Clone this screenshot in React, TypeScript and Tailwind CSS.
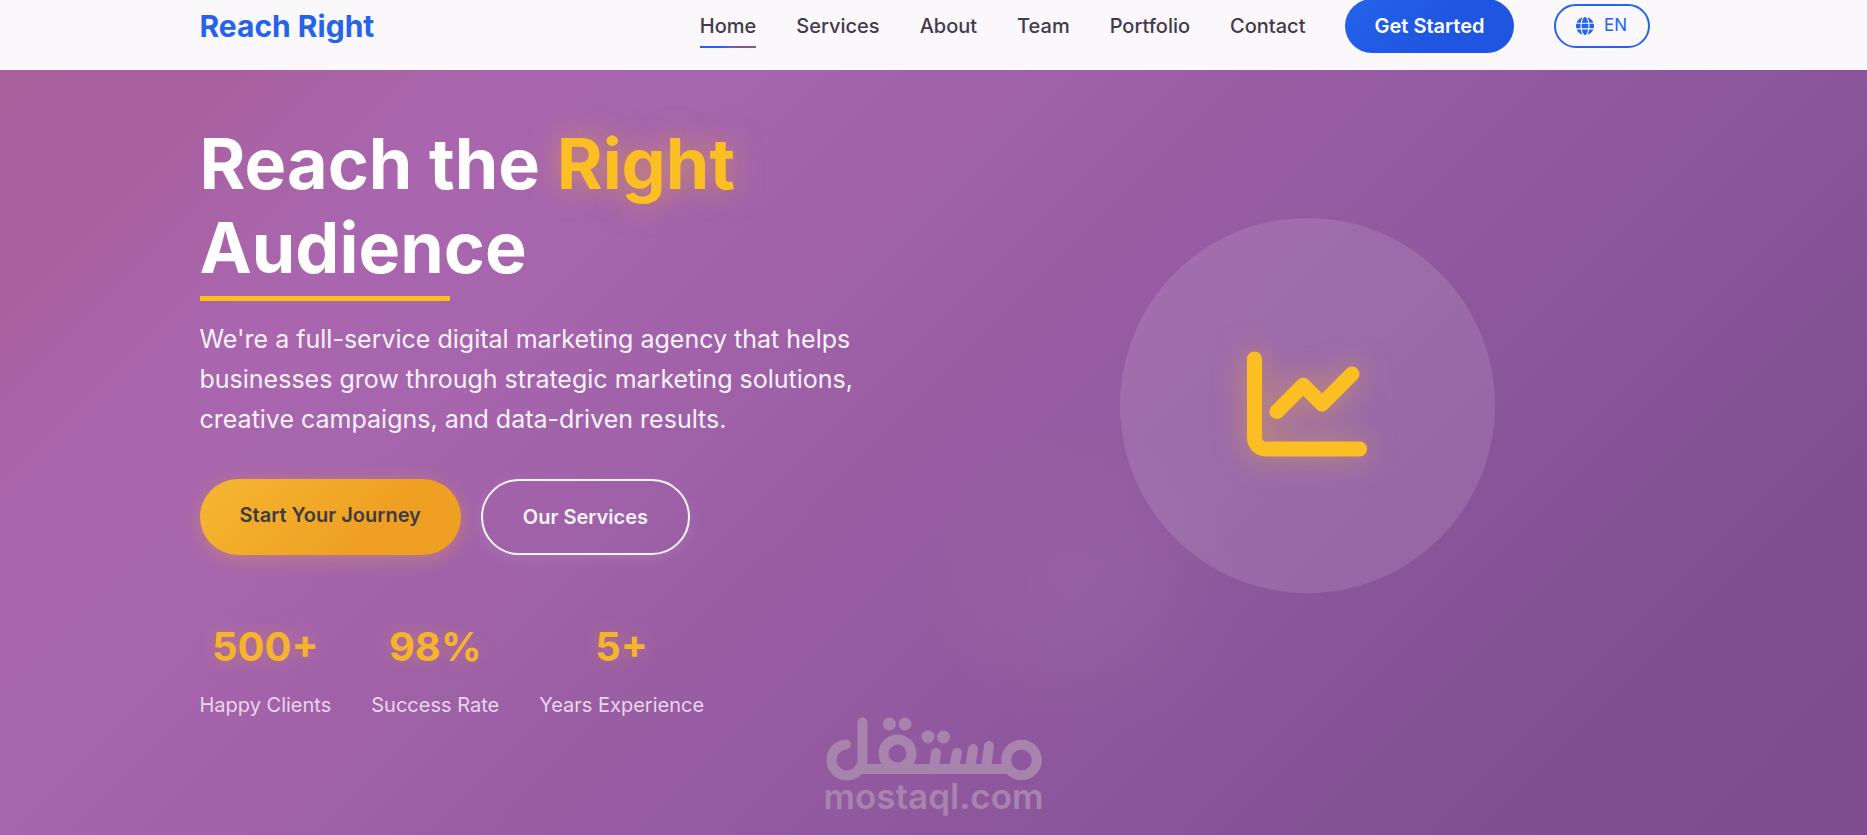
import { FaChartLine, FaGlobe } from "react-icons/fa6";

const navLinks = ["Home", "Services", "About", "Team", "Portfolio", "Contact"];

const stats = [
  { value: "500+", label: "Happy Clients" },
  { value: "98%", label: "Success Rate" },
  { value: "5+", label: "Years Experience" },
];

function Header() {
  return (
    <header className="overflow-hidden bg-[#faf8fb] pr-[18px]">
      <div className="mx-auto flex h-[70px] max-w-[1450px] items-center justify-between pb-[18px]">
        <a href="#home" className="text-[30px] leading-[48px] font-bold text-[#2563eb]">
          Reach Right
        </a>
        <div className="flex items-center gap-10">
          <nav className="flex items-center gap-10">
            {navLinks.map((label) => (
              <a
                key={label}
                href={`#${label.toLowerCase()}`}
                className="relative text-xl leading-8 font-medium text-[#443a4c]"
              >
                {label}
                {label === "Home" && (
                  <span className="absolute inset-x-0 top-9 h-0.5 bg-linear-to-r from-[#2563eb] from-40% to-[#8f4f96] to-75%" />
                )}
              </a>
            ))}
          </nav>
          <a
            href="#contact"
            className="flex h-[54px] items-center rounded-full bg-linear-135 from-[#2563eb] to-[#1f55e0] to-60% px-[29px] text-xl font-semibold text-white"
          >
            Get Started
          </a>
          <button
            type="button"
            className="flex h-11 w-24 items-center justify-center gap-2.5 rounded-full border-2 border-[#2563eb] text-[17px] text-[#2563eb]"
          >
            <FaGlobe className="size-[18px]" aria-hidden="true" />
            EN
          </button>
        </div>
      </div>
    </header>
  );
}

function Watermark() {
  return (
    <div className="pointer-events-none absolute bottom-0 left-1/2 flex w-[218px] -translate-x-1/2 flex-col items-center pb-6 text-[#a883ad]">
      <svg viewBox="0 0 218 64" className="h-16 w-full" aria-hidden="true">
        <g fill="none" stroke="currentColor" strokeWidth="10" strokeLinecap="round">
          <path d="M21 27.500a15.500 15.500 0 1 0 16.500 15.500V5.500" />
          <path d="M34 52H184" />
          <circle cx="72.500" cy="36.500" r="14" />
          <circle cx="196.500" cy="43" r="15.300" />
          <path d="M109 51L111 36M129 51L132 36M145 51L148 32M161 51L164 29" />
        </g>
        <g fill="currentColor">
          <circle cx="64.500" cy="7" r="6.500" />
          <circle cx="80" cy="7" r="6.500" />
          <circle cx="103" cy="20" r="6.500" />
          <circle cx="118.500" cy="20" r="6.500" />
        </g>
      </svg>
      <span className="text-[35px] leading-[30px] font-semibold">mostaql.com</span>
    </div>
  );
}

function Hero() {
  return (
    <main className="relative flex-1 bg-[radial-gradient(circle_at_58%_67%,rgba(255,255,255,0.05),transparent_160px),linear-gradient(135deg,#a9609d_0%,#a9609f_8%,#a966ae_19%,#a765ad_28%,#8c569c_68%,#804d90_88%,#7e4c8f_100%)] pr-[18px]">
      <div className="mx-auto grid max-w-[1450px] grid-cols-2 gap-20 pt-[52px] pb-[100px]">
        <section>
          <h1 className="text-[70px] leading-[84px] font-bold text-white">
            Reach the{" "}
            <span className="text-[#fbbf24] [text-shadow:0_0_30px_rgba(251,191,36,0.5)]">
              Right
            </span>{" "}
            Audience
          </h1>
          <div className="mt-1.5 h-[5px] w-[250px] bg-[#fbbf24]" />
          <p className="mt-[18px] text-[25px] leading-10 text-[#f8f2fa]">
            We're a full-service digital marketing agency that helps businesses grow through
            strategic marketing solutions, creative campaigns, and data-driven results.
          </p>
          <div className="mt-10 flex gap-5 text-xl leading-8 font-semibold">
            <a
              href="#start"
              className="rounded-full bg-linear-135 from-[#f5b731] to-[#efa022] to-65% px-10 py-5 text-[#403a42] shadow-[0_4px_20px_rgba(251,191,36,0.3)]"
            >
              Start Your Journey
            </a>
            <a
              href="#services"
              className="rounded-full border-2 border-[#fbf6fc] px-10 py-5 text-[#f8f2fa] shadow-[0_4px_15px_rgba(255,255,255,0.1)]"
            >
              Our Services
            </a>
          </div>
          <dl className="mt-[60px] flex gap-10 text-center">
            {stats.map(({ value, label }) => (
              <div key={label} className="flex flex-col-reverse gap-2.5">
                <dt className="text-xl leading-8 text-[#e8d6ea]">{label}</dt>
                <dd className="text-[40px] leading-[64px] font-bold text-[#f6b42c] [text-shadow:0_0_20px_rgba(251,191,36,0.3)]">
                  {value}
                </dd>
              </div>
            ))}
          </dl>
        </section>
        <section className="flex justify-center pt-24">
          <div className="flex size-[375px] items-center justify-center rounded-full bg-[#ffffff1d] pb-1">
            <FaChartLine
              className="size-[120px] text-[#fbbf24] drop-shadow-[0_0_15px_rgba(251,191,36,0.5)]"
              aria-hidden="true"
            />
          </div>
        </section>
      </div>
      <Watermark />
    </main>
  );
}

export default function App() {
  return (
    <div className="flex min-h-screen flex-col font-[Inter,sans-serif]">
      <Header />
      <Hero />
    </div>
  );
}
